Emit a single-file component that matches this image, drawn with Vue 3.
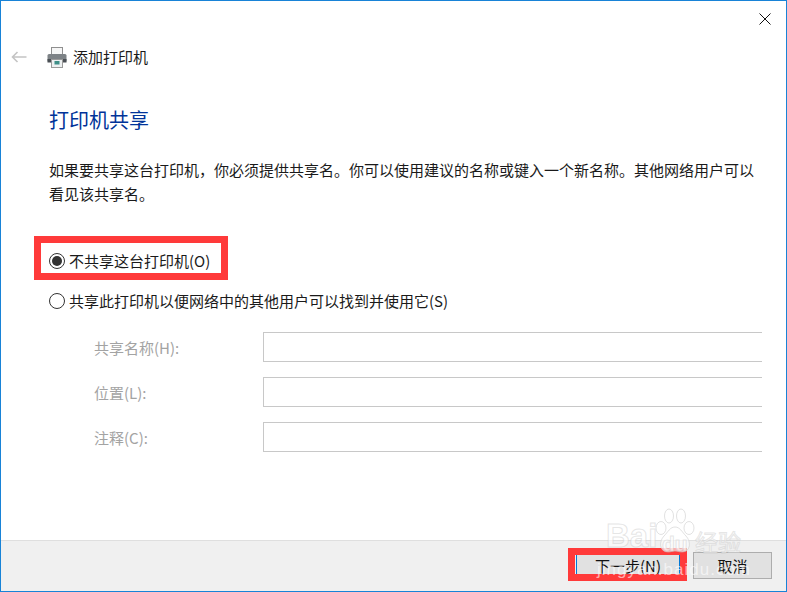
<script setup>
const fields = [
  { label: '共享名称(H):' },
  { label: '位置(L):' },
  { label: '注释(C):' },
]
</script>

<template>
  <div class="window">
    <div class="close">
      <svg width="12" height="12" viewBox="0 0 12 12"><path d="M0.5 0.5 L11.5 11.5 M11.5 0.5 L0.5 11.5" stroke="#111" stroke-width="1" fill="none" /></svg>
    </div>
    <header class="head">
      <svg class="back" width="16" height="12" viewBox="0 0 16 12"><path d="M15.5 6 H1.5 M6.5 1 L1.5 6 L6.5 11" stroke="#c4c4c4" stroke-width="1.6" fill="none" /></svg>
      <svg class="printer" width="20" height="21" viewBox="0 0 20 21">
        <rect x="4.5" y="0.5" width="11" height="8" fill="#f6f6f6" stroke="#8f8f8f" />
        <rect x="0.5" y="7" width="19" height="8" rx="1.5" fill="#7d8286" />
        <rect x="0.5" y="12" width="19" height="3.5" fill="#4a4f54" />
        <rect x="4.5" y="12.5" width="11" height="8" fill="#eef1f2" stroke="#9a9a9a" />
        <rect x="7.5" y="14" width="5" height="3.5" fill="#3f8f88" />
      </svg>
      <span class="head-title">添加打印机</span>
    </header>
    <main class="body">
      <h1 class="title">打印机共享</h1>
      <p class="desc">如果要共享这台打印机，你必须提供共享名。你可以使用建议的名称或键入一个新名称。其他网络用户可以<br />看见该共享名。</p>
      <label class="radio first"><span class="dot on"></span>不共享这台打印机(O)</label>
      <label class="radio second"><span class="dot"></span>共享此打印机以便网络中的其他用户可以找到并使用它(S)</label>
      <div class="fields">
        <div v-for="f in fields" :key="f.label" class="field">
          <span class="field-label">{{ f.label }}</span>
          <div class="input"></div>
        </div>
      </div>
    </main>
    <footer class="foot">
      <button class="btn next">下一步(N)</button>
      <button class="btn cancel">取消</button>
    </footer>

    <div class="mark mark-radio"></div>
    <div class="mark mark-next"></div>

    <div class="wm">
      <svg class="paw" width="40" height="46" viewBox="0 0 40 46" fill="#fff" fill-opacity="0.6" stroke="#c8c8c8" stroke-opacity="0.55">
        <ellipse cx="6" cy="20" rx="5" ry="6.5" />
        <ellipse cx="14" cy="8" rx="4.5" ry="7" />
        <ellipse cx="26" cy="8" rx="4.5" ry="7" />
        <ellipse cx="34" cy="20" rx="5" ry="6.5" />
        <path d="M20 19c-5 0-7 5-11 9-5 5-5 16 4 16 3 0 4-1 7-1s4 1 7 1c9 0 9-11 4-16-4-4-6-9-11-9z" />
      </svg>
      <span class="wm-bai">Bai</span><span class="wm-du">du</span><span class="wm-cn">经验</span>
      <span class="wm-url">jingyan.baidu.com</span>
    </div>
  </div>
</template>

<style>
html, body { margin: 0; background: #fff; }
</style>

<style scoped>
.window {
  position: relative;
  box-sizing: border-box;
  width: 787px;
  height: 592px;
  border: 1px solid #1883d7;
  background: #fff;
  display: flex;
  flex-direction: column;
  overflow: hidden;
  font-family: "Noto Sans CJK SC", "Liberation Sans", sans-serif;
  font-size: 15px;
  color: #1a1a1a;
}
.close { position: absolute; top: 12px; right: 15px; width: 12px; height: 12px; line-height: 0; }
.head {
  height: 38px;
  margin-top: 37px;
  display: flex;
  align-items: center;
  flex: none;
}
.back { margin-left: 10px; }
.printer { margin-left: 20px; }
.head-title { margin-left: 6px; line-height: 20px; }
.body { flex: 1; padding-left: 48px; min-height: 0; }
.title {
  margin: 30px 0 0;
  font-size: 20px;
  font-weight: 400;
  line-height: 28px;
  color: #003399;
}
.desc { margin: 24px 0 0; line-height: 24px; width: 720px; }
.radio { display: flex; align-items: center; line-height: 22px; }
.first { margin-top: 44px; }
.second { margin-top: 18px; }
.dot {
  box-sizing: border-box;
  width: 16px;
  height: 16px;
  border: 1px solid #333;
  border-radius: 50%;
  margin-right: 4px;
  display: flex;
  align-items: center;
  justify-content: center;
}
.dot.on::after { content: ""; width: 10px; height: 10px; border-radius: 50%; background: #333; }
.fields { display: flex; flex-direction: column; gap: 15px; margin-top: 20px; padding-left: 45px; }
.field { display: flex; align-items: center; height: 30px; }
.field-label { width: 169px; color: #a3a3a3; }
.input {
  box-sizing: border-box;
  width: 499px;
  height: 30px;
  border: 1px solid #c8c8c8;
  border-right: 0;
}
.foot {
  flex: none;
  height: 51px;
  box-sizing: border-box;
  background: #f0f0f0;
  border-top: 1px solid #dfdfdf;
  display: flex;
  justify-content: flex-end;
  gap: 13px;
  padding: 11px 14px 0 0;
}
.btn {
  box-sizing: border-box;
  height: 27px;
  border: 1px solid #adadad;
  background: #e1e1e1;
  color: #111;
  font: inherit;
  padding: 0;
  line-height: 24px;
}
.next { width: 104px; border-color: #0078d7; }
.cancel { width: 79px; }
.mark { position: absolute; box-sizing: border-box; border: 7px solid #ff3a3a; }
.mark-radio { left: 33px; top: 235px; width: 194px; height: 44px; }
.mark-next { left: 567px; top: 547px; width: 119px; height: 33px; }
.wm { position: absolute; left: 0; top: 0; width: 0; height: 0; color: rgba(255,255,255,0.6); font-family: "Liberation Sans", sans-serif; -webkit-text-stroke: 1px rgba(190,190,190,0.4); }
.wm > * { position: absolute; white-space: nowrap; }
.paw { left: 654px; top: 507px; }
.wm-bai { left: 605px; top: 516px; font-size: 33px; font-weight: 700; line-height: 38px; }
.wm-du { left: 661px; top: 530px; font-size: 21px; font-weight: 700; line-height: 26px; }
.wm-cn { left: 694px; top: 524px; font-size: 23px; line-height: 32px; font-family: "Noto Sans CJK SC", sans-serif; }
.wm-url { left: 596px; top: 558px; font-size: 17px; line-height: 22px; letter-spacing: 1px; -webkit-text-stroke: 0; color: rgba(255,255,255,0.6); }
</style>
